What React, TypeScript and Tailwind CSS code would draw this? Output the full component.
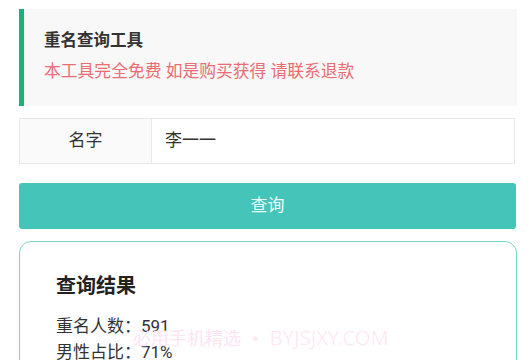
import React from "react";

export default function App() {
  return (
    <div className="relative w-[530px] h-[360px] overflow-hidden bg-white font-['Roboto','Noto_Sans_CJK_SC',sans-serif] text-[#333]">
      <div className="pl-[19px] pt-[9px] w-[517px] flex flex-col">
        <div className="h-[97px] bg-[#f8f8f8] border-l-[5px] border-[#1fb07a] pl-[20px] flex flex-col justify-center">
          <div className="text-[16.5px] leading-[24px] font-bold text-[#333] -mt-[3px]">重名查询工具</div>
          <div className="text-[16.8px] leading-[24px] text-[#ec6c73] mt-[6px]">本工具完全免费 如是购买获得 请联系退款</div>
        </div>
        <div className="mt-[12px] h-[46px] w-[496px] border border-[#e8e8e8] flex">
          <div className="w-[132px] bg-[#fafafa] border-r border-[#e8e8e8] flex items-center justify-center text-[17px]">名字</div>
          <div className="flex-1 flex items-center pl-[13px] text-[17px]">李一一</div>
        </div>
        <button className="mt-[19px] h-[46px] w-[497px] rounded-[3px] bg-[#45c4b9] text-[#eefaf8] text-[17px] flex items-center justify-center">查询</button>
        <div className="mt-[12px] w-[498px] h-[140px] border-[1.5px] border-[#7fd3c9] rounded-[12px] pl-[36px] pt-[30px]">
          <div className="text-[20px] leading-[28px] font-bold text-[#222]">查询结果</div>
          <div className="mt-[13px] text-[17px] leading-[26px] text-[#333]">重名人数：591</div>
          <div className="text-[17px] leading-[26px] text-[#333]">男性占比：71%</div>
        </div>
      </div>
      <div className="absolute left-[133px] top-[325px] flex items-center h-[26px] text-[#fde5f3] whitespace-nowrap pointer-events-none font-['Noto_Sans','Noto_Sans_CJK_SC',sans-serif]">
        <span className="text-[18px]">必用手机精选</span>
        <span className="text-[18px] mx-[11px]">•</span>
        <span className="text-[20px] font-light tracking-[0.5px]">BYJSJXY.COM</span>
      </div>
    </div>
  );
}
